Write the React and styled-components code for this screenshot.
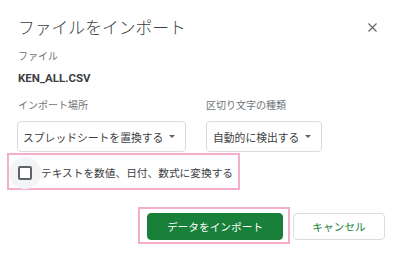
import React from 'react';
import styled, { createGlobalStyle } from 'styled-components';

const Global = createGlobalStyle`
  html, body {
    margin: 0;
    padding: 0;
    background: #ffffff;
  }
  body {
    font-family: Roboto, "Noto Sans CJK JP", sans-serif;
  }
`;

const Dialog = styled.div`
  width: 400px;
  height: 253px;
  box-sizing: border-box;
  padding: 15px 15px 0 18px;
  background: #ffffff;
  overflow: hidden;
`;

const Header = styled.div`
  display: flex;
  align-items: center;
  justify-content: space-between;
  height: 24px;
`;

const Title = styled.h1`
  margin: 0;
  font-family: "Noto Sans CJK JP", sans-serif;
  font-size: 16.8px;
  line-height: 24px;
  font-weight: 300;
  color: #3c4043;
`;

const Close = styled.button`
  border: none;
  background: none;
  padding: 0;
  margin-right: 7px;
  width: 12px;
  height: 12px;
  display: flex;
  align-items: center;
  justify-content: center;
  cursor: pointer;
`;

const Label = styled.div`
  font-family: "Noto Sans CJK JP", sans-serif;
  font-size: 10px;
  line-height: 14px;
  color: #70757a;
  margin-top: ${(p) => p.$top || 0}px;
  padding-left: ${(p) => p.$indent || 0}px;
`;

const FileName = styled.div`
  font-family: Roboto, sans-serif;
  font-weight: 700;
  font-size: 11.5px;
  line-height: 16px;
  color: #3c4043;
  margin-top: 7px;
`;

const Options = styled.div`
  display: grid;
  grid-template-columns: 169px 116px;
  column-gap: 20px;
  margin-top: 12px;
  margin-left: -1px;
`;

const Select = styled.div`
  margin-top: 9px;
  height: 31px;
  box-sizing: border-box;
  border: 1px solid #dadce0;
  border-radius: 4px;
  display: flex;
  align-items: center;
  padding: 0 12px 0 ${(p) => p.$pad}px;
  gap: 6px;
  font-family: "Noto Sans CJK JP", sans-serif;
  font-size: 10.8px;
  color: #3c4043;
  white-space: nowrap;
`;

const Caret = styled.span`
  width: 0;
  height: 0;
  border-left: 3px solid transparent;
  border-right: 3px solid transparent;
  border-top: 3px solid #5f6368;
  margin-left: auto;
`;

const Highlight = styled.div`
  margin: 1px 0 0 -11px;
  width: 233px;
  height: 37px;
  box-sizing: border-box;
  border: 2px solid #f4aecb;
  display: flex;
  align-items: center;
  padding-left: 9px;
`;

const CheckWrap = styled.span`
  position: relative;
  width: 14px;
  height: 14px;
  display: flex;
  align-items: center;
  justify-content: center;
  margin-top: 2px;

  &::before {
    content: '';
    position: absolute;
    left: -9px;
    top: -9px;
    width: 32px;
    height: 32px;
    border-radius: 50%;
    background: #f3f4f5;
  }
`;

const Box = styled.span`
  position: relative;
  width: 14px;
  height: 14px;
  box-sizing: border-box;
  border: 2px solid #5f6368;
  border-radius: 2px;
  background: #ffffff;
`;

const CheckText = styled.span`
  margin-left: 9px;
  margin-top: 2px;
  font-family: "Noto Sans CJK JP", sans-serif;
  font-size: 10.7px;
  color: #3c4043;
  white-space: nowrap;
`;

const Actions = styled.div`
  display: flex;
  justify-content: flex-end;
  align-items: flex-start;
  gap: 3px;
  margin-top: 17px;
`;

const Outline = styled.div`
  border: 2px solid #f4aecb;
  padding: 4px 5px 2px 7px;
`;

const Button = styled.button`
  height: 27px;
  width: ${(p) => p.$w}px;
  box-sizing: border-box;
  border-radius: 4px;
  border: 1px solid ${(p) => (p.$primary ? '#188038' : '#dadce0')};
  background: ${(p) => (p.$primary ? '#188038' : '#ffffff')};
  color: ${(p) => (p.$primary ? '#ffffff' : '#188038')};
  font-family: "Noto Sans CJK JP", sans-serif;
  font-size: 10.7px;
  padding: 0;
  cursor: pointer;
  margin-top: ${(p) => p.$top || 0}px;
`;

export default function App() {
  return (
    <>
      <Global />
      <Dialog>
        <Header>
          <Title>ファイルをインポート</Title>
          <Close aria-label="閉じる">
            <svg width="9" height="9" viewBox="0 0 9 9">
              <path d="M0.5 0.5 L8.5 8.5 M8.5 0.5 L0.5 8.5" stroke="#5f6368" strokeWidth="1.1" />
            </svg>
          </Close>
        </Header>
        <Label $top={10}>ファイル</Label>
        <FileName>KEN_ALL.CSV</FileName>
        <Options>
          <div>
            <Label $indent={1}>インポート場所</Label>
            <Select $pad={5}>
              スプレッドシートを置換する
              <Caret />
            </Select>
          </div>
          <div>
            <Label $indent={0}>区切り文字の種類</Label>
            <Select $pad={6}>
              自動的に検出する
              <Caret />
            </Select>
          </div>
        </Options>
        <Highlight>
          <CheckWrap>
            <Box />
          </CheckWrap>
          <CheckText>テキストを数値、日付、数式に変換する</CheckText>
        </Highlight>
        <Actions>
          <Outline>
            <Button $primary $w={136}>データをインポート</Button>
          </Outline>
          <Button $w={92} $top={6}>キャンセル</Button>
        </Actions>
      </Dialog>
    </>
  );
}
